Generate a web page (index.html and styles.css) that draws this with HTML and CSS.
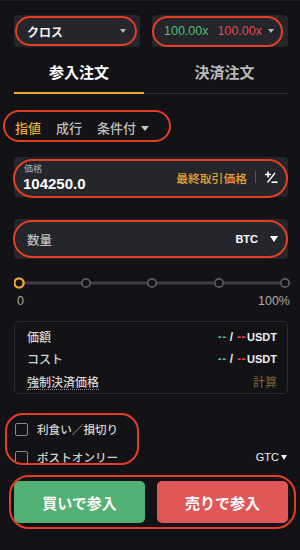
FILE: index.html
```html
<!DOCTYPE html>
<html lang="ja">
<head>
<meta charset="utf-8">
<link rel="stylesheet" href="styles.css">
</head>
<body>
<div class="panel">
  <div class="top-row">
    <div class="select select-margin ring-host ring-a">
      <span class="sel-text">クロス</span>
      <span class="tri-sm"></span>
    </div>
    <div class="select select-lev ring-host ring-b">
      <span class="lev-green">100.00x</span>
      <span class="lev-red">100.00x</span>
      <span class="tri-sm"></span>
    </div>
  </div>

  <div class="tabs">
    <div class="tab tab-active">参入注文</div>
    <div class="tab tab-idle">決済注文</div>
  </div>

  <div class="types ring-host ring-c">
    <span class="type type-on">指値</span>
    <span class="type">成行</span>
    <span class="type">条件付<span class="tri-md"></span></span>
  </div>

  <div class="field field-price ring-host ring-d">
    <div class="field-left">
      <div class="field-label">価格</div>
      <div class="field-value">104250.0</div>
    </div>
    <div class="field-right">
      <span class="last-price">最終取引価格</span>
      <span class="divider"></span>
      <svg class="pm" width="14" height="14" viewBox="0 0 14 14">
        <path d="M1 4.5H7M4 1.5V7.5" stroke="#fff" stroke-width="1.6" fill="none"/>
        <path d="M3.5 12.5L11 3" stroke="#fff" stroke-width="1.3" fill="none"/>
        <path d="M7.5 12.2H13.5" stroke="#fff" stroke-width="1.6" fill="none"/>
      </svg>
    </div>
  </div>

  <div class="field field-qty ring-host ring-e">
    <span class="qty-label">数量</span>
    <span class="qty-unit">BTC<span class="tri-lg"></span></span>
  </div>

  <div class="slider">
    <svg width="276" height="12" viewBox="0 0 276 12">
      <rect x="10" y="4.5" width="262" height="3" fill="#3d3e44"/>
      <circle cx="72" cy="6" r="4.2" fill="#131317" stroke="#5a5b61" stroke-width="1.8"/>
      <circle cx="138" cy="6" r="4.2" fill="#131317" stroke="#5a5b61" stroke-width="1.8"/>
      <circle cx="205" cy="6" r="4.2" fill="#131317" stroke="#5a5b61" stroke-width="1.8"/>
      <circle cx="271" cy="6" r="4.2" fill="#131317" stroke="#5a5b61" stroke-width="1.8"/>
      <circle cx="5" cy="6" r="4.6" fill="#131317" stroke="#f0a735" stroke-width="2.4"/>
    </svg>
  </div>
  <div class="slider-labels">
    <span>0</span>
    <span>100%</span>
  </div>

  <div class="info">
    <div class="info-row">
      <span class="info-key">価額</span>
      <span class="info-val"><span class="g">--</span><span class="sl">/</span><span class="r">--</span><span class="u">USDT</span></span>
    </div>
    <div class="info-row">
      <span class="info-key">コスト</span>
      <span class="info-val"><span class="g">--</span><span class="sl">/</span><span class="r">--</span><span class="u">USDT</span></span>
    </div>
    <div class="info-row">
      <span class="info-key dotted">強制決済価格</span>
      <span class="calc">計算</span>
    </div>
  </div>

  <div class="checks ring-host ring-f">
    <div class="check-row">
      <span class="box"></span><span class="check-text">利食い／損切り</span>
    </div>
    <div class="check-row">
      <span class="box"></span><span class="check-text">ポストオンリー</span>
    </div>
  </div>
  <div class="gtc">GTC<span class="tri-xs"></span></div>

  <div class="buttons ring-host ring-g">
    <div class="btn btn-buy">買いで参入</div>
    <div class="btn btn-sell">売りで参入</div>
  </div>
</div>
</body>
</html>
```

FILE: styles.css
```css
* { box-sizing: border-box; }
html, body {
  margin: 0;
  padding: 0;
  background: #131317;
}
body {
  width: 300px;
  height: 550px;
  overflow: hidden;
  font-family: "Liberation Sans", "Noto Sans CJK JP", sans-serif;
  color: #e6e6e6;
}
.panel {
  position: relative;
  padding: 15px 12px 0 14px;
  height: 550px;
  border-top: 1px solid #1d1e23;
}
.ring-host { position: relative; }
.ring-host::after {
  content: "";
  position: absolute;
  border: 2.5px solid #e43f24;
  pointer-events: none;
}

/* top selects */
.top-row {
  display: flex;
  gap: 12px;
  margin-top: -1px;
}
.select {
  height: 32px;
  background: #25262b;
  border-radius: 4px;
  display: flex;
  align-items: center;
}
.select-margin {
  width: 126px;
  padding: 0 14px 0 13px;
  justify-content: space-between;
}
.select-lev {
  flex: 1;
  padding: 0 12px 0 12px;
}
.sel-text {
  font-family: "Noto Sans CJK JP", sans-serif;
  font-weight: 700;
  font-size: 12px;
  color: #f2f2f2;
}
.lev-green { color: #54bd72; font-size: 12.5px; }
.lev-red { color: #e5484d; font-size: 12.5px; margin-left: 9px; }
.select-lev .tri-sm { margin-left: 6px; }
.tri-sm {
  width: 0; height: 0;
  border-left: 3.5px solid transparent;
  border-right: 3.5px solid transparent;
  border-top: 4px solid #b5b5b5;
}
.ring-a::after { top: 1px; left: 1px; right: 3px; bottom: 1px; border-radius: 16px; }
.ring-b::after { top: 1px; left: 0; right: 5px; bottom: 0; border-radius: 16px; }

/* tabs */
.tabs {
  display: flex;
  align-items: flex-end;
}
.tab {
  font-family: "Noto Sans CJK JP", sans-serif;
  font-weight: 700;
  font-size: 15px;
  line-height: 18px;
  text-align: center;
  padding-top: 16px;
  padding-bottom: 11px;
}
.tab-active {
  width: 130px;
  color: #ffffff;
  border-bottom: 2px solid #f0a735;
}
.tab-idle {
  flex: 1;
  color: #b8b8b8;
  padding-left: 17px;
  padding-bottom: 12px;
  border-bottom: 1px solid #2b2c31;
}

/* order types */
.types {
  margin-top: 23px;
  height: 22px;
  display: flex;
  align-items: center;
  gap: 15px;
  font-family: "Noto Sans CJK JP", sans-serif;
  font-weight: 500;
  font-size: 13px;
  line-height: 22px;
  padding-left: 1px;
}
.type { color: #bdbdbd; display: flex; align-items: center; }
.type-on { color: #f0a735; }
.tri-md {
  display: inline-block;
  width: 0; height: 0;
  border-left: 4px solid transparent;
  border-right: 4px solid transparent;
  border-top: 5px solid #c8c8c8;
  margin-left: 5px;
}
.ring-c::after { top: -7px; left: -11px; width: 164px; bottom: -3px; border-radius: 17px; }

/* fields */
.field {
  height: 40px;
  background: #25262b;
  border-radius: 4px;
  display: flex;
  align-items: center;
  justify-content: space-between;
}
.field-price {
  margin-top: 18px;
  padding: 0 10px 0 9px;
}
.field-label {
  font-family: "Noto Sans CJK JP", sans-serif;
  font-size: 9px;
  line-height: 11px;
  color: #b5b5b5;
  padding-left: 1px;
}
.field-value {
  font-weight: 700;
  font-size: 15px;
  line-height: 18px;
  color: #ffffff;
  margin-top: 1px;
}
.field-left { padding-top: 1px; }
.field-right {
  display: flex;
  align-items: center;
}
.last-price {
  font-family: "Noto Sans CJK JP", sans-serif;
  font-weight: 500;
  font-size: 11.8px;
  color: #e7a23b;
}
.divider {
  width: 1px;
  height: 12px;
  background: #55565c;
  margin: 0 8px 0 8px;
}
.pm { display: block; }
.ring-d::after { top: 2px; left: -1px; right: 0; bottom: -1px; border-radius: 20px; }

.field-qty {
  margin-top: 22px;
  padding: 0 10px 0 13px;
}
.qty-label {
  font-family: "Noto Sans CJK JP", sans-serif;
  font-weight: 500;
  font-size: 12.5px;
  color: #bdbdbd;
}
.qty-unit {
  display: flex;
  align-items: center;
  font-weight: 700;
  font-size: 11px;
  color: #ffffff;
}
.tri-lg {
  display: inline-block;
  width: 0; height: 0;
  border-left: 4px solid transparent;
  border-right: 4px solid transparent;
  border-top: 6px solid #ffffff;
  margin-left: 12px;
}
.ring-e::after { top: 1px; left: -1px; right: 0; bottom: 1px; border-radius: 20px; }

/* slider */
.slider {
  margin-top: 18px;
  height: 12px;
  margin-right: -2px;
}
.slider svg { display: block; }
.slider-labels {
  margin-top: 5px;
  margin-right: -2px;
  padding-left: 3px;
  display: flex;
  justify-content: space-between;
  font-size: 12.5px;
  line-height: 14px;
  color: #a9a9a9;
}

/* info box */
.info {
  margin-top: 13px;
  height: 73px;
  border: 1px solid #2a2b30;
  border-radius: 5px;
  padding: 4px 10px 1px 12px;
}
.info-row {
  height: 22px;
  display: flex;
  align-items: center;
  justify-content: space-between;
}
.info-key {
  font-family: "Noto Sans CJK JP", sans-serif;
  font-weight: 500;
  font-size: 12px;
  line-height: 16px;
  color: #d2d2d2;
}
.dotted {
  border-bottom: 1px dotted #8d8d8d;
  line-height: 15px;
  margin-top: 2px;
}
.info-val {
  display: flex;
  align-items: center;
  font-weight: 700;
  font-size: 11px;
}
.info-val .g { color: #54bd72; font-size: 12px; letter-spacing: 0.5px; }
.info-val .r { color: #e5484d; font-size: 12px; letter-spacing: 0.5px; }
.info-val .sl { color: #e8e8e8; margin: 0 4px 0 3px; font-size: 12px; }
.info-val .u { color: #f0f0f0; margin-left: 1px; }
.calc {
  font-family: "Noto Sans CJK JP", sans-serif;
  font-weight: 500;
  font-size: 12px;
  color: #6e5630;
}

/* checks */
.checks {
  margin-top: 24px;
  height: 50px;
  display: flex;
  flex-direction: column;
  gap: 6px;
}
.check-row {
  height: 22px;
  display: flex;
  align-items: center;
}
.box {
  width: 13px;
  height: 13px;
  border: 1.5px solid #8a8a8e;
  border-radius: 2px;
  margin-left: 1px;
}
.check-text {
  font-family: "Noto Sans CJK JP", sans-serif;
  font-weight: 500;
  font-size: 11.6px;
  color: #d2d2d2;
  margin-left: 9px;
}
.ring-f::after { top: -5px; left: -9px; width: 130px; bottom: 3px; border-radius: 18px; }
.gtc {
  margin-top: -22px;
  height: 22px;
  display: flex;
  align-items: center;
  justify-content: flex-end;
  font-size: 11px;
  color: #f0f0f0;
  padding-right: 1px;
}
.tri-xs {
  display: inline-block;
  width: 0; height: 0;
  border-left: 3.5px solid transparent;
  border-right: 3.5px solid transparent;
  border-top: 5px solid #f0f0f0;
  margin-left: 2px;
}

/* buttons */
.buttons {
  margin-top: 13px;
  display: flex;
  gap: 12px;
  height: 42px;
}
.btn {
  flex: 1;
  border-radius: 5px;
  display: flex;
  align-items: center;
  justify-content: center;
  font-family: "Noto Sans CJK JP", sans-serif;
  font-weight: 700;
  font-size: 15px;
  color: #ffffff;
}
.btn-buy { background: #53b073; }
.btn-sell { background: #e05757; }
.ring-g::after { top: -6px; left: -5px; right: -8px; bottom: -6px; border-radius: 20px; }
```
